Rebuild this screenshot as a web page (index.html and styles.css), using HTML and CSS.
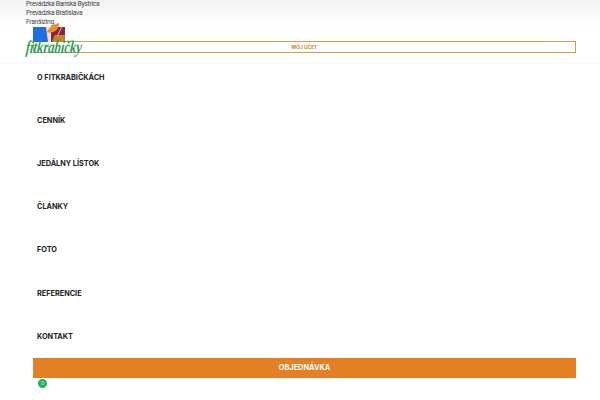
FILE: index.html
```html
<!DOCTYPE html>
<html lang="sk">
<head>
  <meta charset="UTF-8" />
  <title>Fitkrabičky</title>
  <link rel="stylesheet" href="styles.css">
</head>
<body>
  <header class="header">
    <div class="topbar">
      <a href="#">Prevádzka Banská Bystrica</a>
      <a href="#">Prevádzka Bratislava</a>
      <a href="#">Franšízing</a>
    </div>
    <div class="account-row">
      <a class="account-btn" href="#">MÔJ ÚČET</a>
    </div>
  </header>

  <div class="logo">
    <svg class="logo-mark" width="42" height="24" viewBox="0 0 42 24">
      <rect x="8" y="5" width="15" height="15" fill="#1f6fe0" />
      <path d="M21 5 H27 V20 H23 Z" fill="#e9e3d2" />
      <rect x="26" y="5" width="14" height="15" fill="#8f2440" />
      <path d="M27 20 L30 13 H40 V20 Z" fill="#b8892f" />
      <path d="M36 5 L37 5 L33 14 L32 14 Z" fill="#d9b6a0" />
      <path d="M22 10 C24 5 29 2 34 1 C34 5 32 9 28 10 C26 11 24 11 22 10 Z" fill="#ee8f2a" />
    </svg>
    <span class="logo-text">fitkrabičky</span>
  </div>

  <nav class="menu">
    <a href="#">O FITKRABIČKÁCH</a>
    <a href="#">CENNÍK</a>
    <a href="#">JEDÁLNY LÍSTOK</a>
    <a href="#">ČLÁNKY</a>
    <a href="#">FOTO</a>
    <a href="#">REFERENCIE</a>
    <a href="#">KONTAKT</a>
  </nav>

  <a class="order-btn" href="#">OBJEDNÁVKA</a>
  <span class="cart-badge">0</span>
</body>
</html>
```

FILE: styles.css
```css
html, body {
  height: 400px;
  overflow: hidden;
}

body {
  margin: 0;
  position: relative;
  background: #fff;
  font-family: "Inter", sans-serif;
  color: #222;
}

a {
  text-decoration: none;
}

.header {
  height: 64px;
  box-sizing: border-box;
  border-bottom: 1px solid #fafafa;
}

.topbar {
  height: 41px;
  box-sizing: border-box;
  padding: 0 26px;
  background: linear-gradient(to bottom, #f2f2f2 0, #fdfdfd 22px, #fff 28px);
  display: flex;
  flex-direction: column;
  font-family: "Roboto", sans-serif;
  font-size: 6.7px;
  letter-spacing: -0.27px;
  line-height: 9.2px;
}

.topbar a {
  color: #444;
}

.logo {
  position: absolute;
  left: 24px;
  top: 22px;
  width: 60px;
  height: 36px;
}

.logo-mark {
  position: absolute;
  left: 1px;
  top: 0;
}

.logo-text {
  position: absolute;
  left: 1px;
  top: 14.5px;
  font-family: "Liberation Serif", serif;
  font-style: italic;
  font-weight: 700;
  font-size: 18px;
  line-height: 20px;
  color: #2f9e58;
  white-space: nowrap;
  transform: scaleX(0.7) skewX(-8deg);
  transform-origin: left bottom;
}

.account-row {
  padding: 0 24px 0 33px;
}

.account-btn {
  display: block;
  height: 10px;
  line-height: 10px;
  border: 1.5px solid #d99a4c;
  text-align: center;
  font-size: 4.9px;
  font-weight: 700;
  color: #e07f24;
}

.menu {
  display: flex;
  flex-direction: column;
  padding: 0 0 0 37px;
  margin-top: -8.3px;
}

.menu a {
  display: block;
  height: 43.2px;
  line-height: 43.2px;
  font-size: 7.3px;
  font-weight: 700;
  color: #222;
}

.order-btn {
  display: block;
  margin: 0 24px 0 33px;
  height: 20px;
  line-height: 20px;
  background: #e37f24;
  color: #fff;
  text-align: center;
  font-size: 7.35px;
  font-weight: 700;
}

.cart-badge {
  position: absolute;
  left: 38px;
  top: 379px;
  width: 9px;
  height: 9px;
  border-radius: 50%;
  background: #27ae60;
  color: #d8f2e2;
  font-size: 5px;
  line-height: 9px;
  text-align: center;
}
```
